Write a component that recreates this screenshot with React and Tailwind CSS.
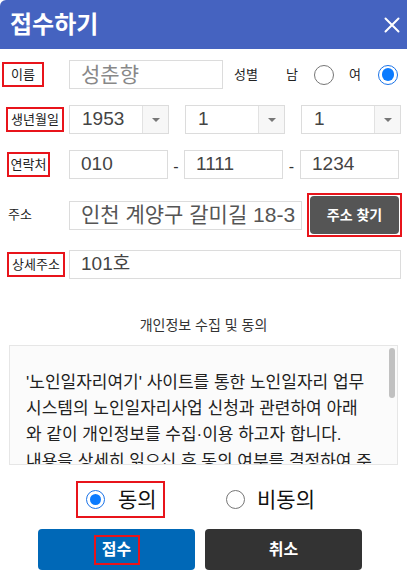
import React from "react";

const font = { fontFamily: '"Liberation Sans", "Noto Sans CJK KR", sans-serif' };

function Radio({ checked, size = 20 }) {
  return (
    <span
      className={`inline-flex items-center justify-center rounded-full bg-white ${checked ? "border-[1.5px] border-[#1a73e8]" : "border border-[#767676]"}`}
      style={{ width: size, height: size }}
    >
      {checked && <span className="rounded-full bg-[#0b7bff]" style={{ width: size * 0.62, height: size * 0.62 }} />}
    </span>
  );
}

function Select({ value, w }) {
  return (
    <div className={`flex h-[29px] ${w} border border-[#dcdcdc] bg-white`}>
      <div className="flex-1 flex items-center pl-[12px] text-[19px] text-[#444]">{value}</div>
      <div className="w-[26px] flex items-center justify-center border-l border-[#e2e2e2] bg-[#f7f7f7]">
        <span className="block w-0 h-0 border-l-[4px] border-r-[4px] border-t-[4px] border-l-transparent border-r-transparent border-t-[#777]" />
      </div>
    </div>
  );
}

function Input({ value, w, size = "text-[19px]", color = "text-[#444]" }) {
  return (
    <div className={`h-[29px] ${w} border border-[#dcdcdc] bg-white flex items-center pl-[11px] overflow-hidden whitespace-nowrap ${size} ${color}`}>
      {value}
    </div>
  );
}

function RedLabel({ children, ml, w }) {
  return (
    <div className={`${ml} ${w} h-[25px] border-2 border-[#e8141b] flex items-center justify-center text-[13px] text-[#222] leading-none`}>
      {children}
    </div>
  );
}

export default function App() {
  return (
    <div className="w-[407px] h-[583px] bg-white overflow-hidden relative" style={font}>
      <div className="h-[49px] bg-[#4563c0] flex items-center justify-between pl-[10px] pr-[7px] rounded-tl-[6px]">
        <span className="text-white font-bold text-[24px] leading-none">접수하기</span>
        <svg width="16" height="16" viewBox="0 0 16 16">
          <path d="M1.5 1.5 L14.5 14.5 M14.5 1.5 L1.5 14.5" stroke="white" strokeWidth="2" strokeLinecap="round" />
        </svg>
      </div>

      {/* Row 1 */}
      <div className="mt-[11px] h-[29px] flex items-center">
        <div className="w-[69px] flex">
          <RedLabel ml="ml-[2px]" w="w-[42px]">이름</RedLabel>
        </div>
        <Input value="성춘향" w="w-[154px]" size="text-[21px]" color="text-[#888]" />
        <span className="ml-[11px] text-[13px] text-[#222]">성별</span>
        <span className="ml-[28px] text-[13px] text-[#222]">남</span>
        <span className="ml-[16px] flex"><Radio checked={false} /></span>
        <span className="ml-[15px] text-[13px] text-[#222]">여</span>
        <span className="ml-[17px] flex"><Radio checked={true} /></span>
      </div>

      {/* Row 2 */}
      <div className="mt-[16px] h-[29px] flex items-center">
        <div className="w-[69px] flex">
          <RedLabel ml="ml-[6px]" w="w-[58px]">생년월일</RedLabel>
        </div>
        <Select value="1953" w="w-[100px]" />
        <div className="w-[16px]" />
        <Select value="1" w="w-[100px]" />
        <div className="w-[16px]" />
        <Select value="1" w="w-[100px]" />
      </div>

      {/* Row 3 */}
      <div className="mt-[16px] h-[29px] flex items-center">
        <div className="w-[69px] flex">
          <RedLabel ml="ml-[7px]" w="w-[43px]">연락처</RedLabel>
        </div>
        <Input value="010" w="w-[99px]" />
        <span className="w-[16px] pt-[4px] text-center text-[16px] text-[#333]">-</span>
        <Input value="1111" w="w-[99px]" />
        <span className="w-[17px] pt-[4px] text-center text-[16px] text-[#333]">-</span>
        <Input value="1234" w="w-[99px]" />
      </div>

      {/* Row 4 */}
      <div className="mt-[14px] h-[44px] flex items-center">
        <div className="w-[69px] pl-[8px] text-[13px] text-[#222]">주소</div>
        <Input value="인천 계양구 갈미길 18-3" w="w-[233px]" size="text-[21px]" color="text-[#555]" />
        <div className="ml-[5px] w-[95px] h-[44px] border-2 border-[#e8141b] p-[1px] flex">
          <div className="flex-1 rounded-[4px] bg-[#555555] flex items-center justify-center text-white font-bold text-[14px]">
            주소 찾기
          </div>
        </div>
      </div>

      {/* Row 5 */}
      <div className="mt-[13px] h-[29px] flex items-center">
        <div className="w-[69px] flex">
          <RedLabel ml="ml-[7px]" w="w-[58px]">상세주소</RedLabel>
        </div>
        <Input value="101호" w="w-[332px]" />
      </div>

      <div className="mt-[39px] text-center text-[14px] text-[#333] leading-none">개인정보 수집 및 동의</div>

      <div className="mt-[13px] mx-[9px] h-[120px] border border-[#e6e6e6] bg-[#fbfbfb] relative overflow-hidden">
        <div className="pl-[16px] pr-[8px] pt-[24px] text-[17px] leading-[26px] text-[#222] whitespace-nowrap">
          <p>
            '노인일자리여기' 사이트를 통한 노인일자리 업무<br />
            시스템의 노인일자리사업 신청과 관련하여 아래<br />
            와 같이 개인정보를 수집·이용 하고자 합니다.
          </p>
          <p className="mt-[1px]">내용을 상세히 읽으신 후 동의 여부를 결정하여 주</p>
        </div>
        <div className="absolute right-[2px] top-[2px] w-[6px] h-[50px] rounded-full bg-[#c1c1c1]" />
      </div>

      <div className="mt-[16px] h-[37px] flex items-center">
        <div className="ml-[76px] w-[89px] h-[37px] border-2 border-[#e8141b] flex items-center">
          <span className="ml-[8px] flex"><Radio checked={true} size={19} /></span>
          <span className="ml-[13px] text-[21px] text-[#111] leading-[26px]">동의</span>
        </div>
        <span className="ml-[61px] flex"><Radio checked={false} size={19} /></span>
        <span className="ml-[12px] text-[21px] text-[#111] leading-[26px]">비동의</span>
      </div>

      <div className="mt-[11px] flex">
        <div className="ml-[38px] w-[157px] h-[41px] rounded-[4px] bg-[#0068b7] flex items-center justify-center">
          <div className="w-[46px] h-[30px] border-2 border-[#e8141b] flex items-center justify-center text-white font-bold text-[16px]">접수</div>
        </div>
        <div className="ml-[10px] w-[157px] h-[41px] rounded-[4px] bg-[#333333] flex items-center justify-center text-white font-bold text-[16px]">
          취소
        </div>
      </div>
    </div>
  );
}
